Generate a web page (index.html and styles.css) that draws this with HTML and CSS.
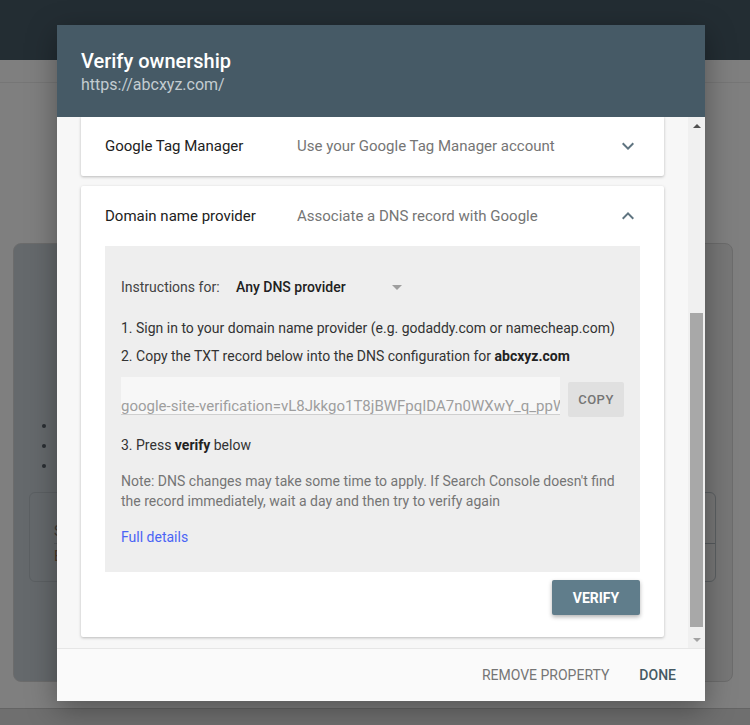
FILE: index.html
```html
<!DOCTYPE html>
<html lang="en">
<head>
    <meta charset="UTF-8">
    <meta name="viewport" content="width=device-width, initial-scale=1.0">
    <title>Verify ownership</title>
    <link rel="stylesheet" href="styles.css">
</head>
<body>

<!-- Page behind the dialog (dimmed) -->
<div class="backdrop">
    <header class="app-bar"></header>
    <div class="app-sub"></div>
    <main class="app-main">
        <section class="bg-card">
            <ul class="bg-list">
                <li>&nbsp;</li>
                <li>&nbsp;</li>
                <li>&nbsp;</li>
            </ul>
            <div class="bg-box">
                <div class="bg-row">S</div>
                <div class="bg-row">E</div>
            </div>
        </section>
    </main>
    <div class="app-foot"></div>
</div>

<!-- Dialog -->
<div class="dialog">
    <div class="dialog-head">
        <h2>Verify ownership</h2>
        <p>https://abcxyz.com/</p>
    </div>

    <div class="dialog-body">
        <div class="scroll-content">

            <!-- Google Tag Manager -->
            <div class="method">
                <div class="method-row">
                    <span class="method-name">Google Tag Manager</span>
                    <span class="method-desc">Use your Google Tag Manager account</span>
                    <svg class="chevron" viewBox="0 0 24 24" width="24" height="24"><path d="M7.41 8.59L12 13.17l4.59-4.58L18 10l-6 6-6-6 1.41-1.41z"/></svg>
                </div>
            </div>

            <!-- Domain name provider -->
            <div class="method">
                <div class="method-row">
                    <span class="method-name">Domain name provider</span>
                    <span class="method-desc">Associate a DNS record with Google</span>
                    <svg class="chevron" viewBox="0 0 24 24" width="24" height="24"><path d="M7.41 15.41L12 10.83l4.59 4.58L18 14l-6-6-6 6z"/></svg>
                </div>

                <div class="panel">
                    <div class="instr-row">
                        <span class="instr-label">Instructions for:</span>
                        <div class="select">
                            <span>Any DNS provider</span>
                            <svg viewBox="0 0 24 24" width="24" height="24"><path d="M7 10l5 5 5-5z"/></svg>
                        </div>
                    </div>

                    <p class="step step-1">1. Sign in to your domain name provider (e.g. godaddy.com or namecheap.com)</p>
                    <p class="step step-2">2. Copy the TXT record below into the DNS configuration for <b>abcxyz.com</b></p>

                    <div class="record-row">
                        <input class="record" type="text" readonly value="google-site-verification=vL8Jkkgo1T8jBWFpqIDA7n0WXwY_q_ppWr4tK2mZ9sQ">
                        <button class="btn-copy" type="button">Copy</button>
                    </div>

                    <p class="step step-3">3. Press <b>verify</b> below</p>

                    <p class="note">Note: DNS changes may take some time to apply. If Search Console doesn't find the record immediately, wait a day and then try to verify again</p>

                    <a class="details" href="#">Full details</a>
                </div>

                <div class="method-actions">
                    <button class="btn-verify" type="button">Verify</button>
                </div>
            </div>

        </div>

        <!-- Scrollbar -->
        <div class="scrollbar">
            <div class="sb-arrow sb-up"></div>
            <div class="sb-track">
                <div class="sb-thumb"></div>
            </div>
            <div class="sb-arrow sb-down"></div>
        </div>
    </div>

    <div class="dialog-foot">
        <button class="btn-text" type="button">Remove property</button>
        <button class="btn-text btn-done" type="button">Done</button>
    </div>
</div>

</body>
</html>
```

FILE: styles.css
```css
body {
    font-family: Roboto, "Noto Sans", Arial, sans-serif;
    background-color: #7f7f7f;
    margin: 0;
    padding: 0;
    height: 725px;
    overflow: hidden;
}

/* Page behind */
.app-bar {
    height: 60px;
    background-color: #232d33;
}
.app-sub {
    height: 22px;
    border-bottom: 1px solid #767676;
}
.app-main {
    padding: 160px 17px 0 13px;
}
.bg-card {
    height: 439px;
    box-sizing: border-box;
    border: 1px solid #6c6c6c;
    border-radius: 8px;
    padding: 171px 16px 0 15px;
    background: linear-gradient(to right, #65696c 0, #65696c 380px, #777 380px);
}
.bg-list {
    margin: 0;
    padding-left: 28px;
    color: #2a2f33;
    font-size: 14px;
    line-height: 20px;
}
.bg-box {
    margin-top: 17px;
    height: 90px;
    box-sizing: border-box;
    border: 1px solid #5c6063;
    border-radius: 6px;
    padding: 26px 0 0 24px;
}
.bg-row {
    color: #3d3a36;
    font-size: 14px;
    line-height: 24px;
}
.bg-row + .bg-row {
    border-top: 1px solid #575b5e;
    color: #4a3a2a;
}
.app-foot {
    margin-top: 26px;
    height: 17px;
    border-top: 1px solid #646464;
    background-color: #6f6f6f;
}

/* Dialog */
.dialog {
    position: fixed;
    left: 57px;
    top: 25px;
    width: 648px;
    height: 676px;
    display: flex;
    flex-direction: column;
    background-color: #fafafa;
    box-shadow: 0 8px 28px rgba(0, 0, 0, 0.35);
}
.dialog-head {
    background-color: #465a66;
    padding: 24px 24px 0;
    height: 92px;
    box-sizing: border-box;
}
.dialog-head h2 {
    margin: 0;
    color: #fff;
    font-size: 20px;
    line-height: 24px;
    font-weight: 500;
}
.dialog-head p {
    margin: 2px 0 0;
    color: #c3ccd1;
    font-size: 16px;
    line-height: 20px;
}
.dialog-body {
    flex: 1;
    display: flex;
    min-height: 0;
    background-color: #f7f7f7;
}
.scroll-content {
    flex: 1;
    overflow: hidden;
    padding: 0 24px;
}

.method {
    background-color: #fff;
    box-shadow: 0 1px 3px rgba(0, 0, 0, 0.25);
    border-radius: 2px;
}
.method:first-child {
    margin-top: -1px;
}
.method + .method {
    margin-top: 10px;
}
.method-row {
    display: grid;
    grid-template-columns: 192px 1fr 24px;
    align-items: center;
    height: 60px;
    padding: 0 24px;
    font-size: 15px;
}
.method-name {
    color: #212121;
}
.method-desc {
    color: #757575;
}
.chevron {
    fill: #5f7480;
}

.panel {
    margin: 0 24px;
    background-color: #eeeeee;
    padding: 21px 16px 25px;
    font-size: 14px;
    line-height: 20px;
    color: #333;
}
.instr-row {
    display: flex;
    align-items: center;
    height: 40px;
}
.instr-label {
    color: #424242;
    width: 115px;
}
.select {
    display: flex;
    align-items: center;
    width: 173px;
    justify-content: space-between;
    color: #212121;
    font-weight: 500;
}
.select svg {
    fill: #9e9e9e;
}
.step {
    margin: 8px 0 0;
}
.step-1 {
    margin-top: 11px;
}
.step b {
    font-weight: 700;
    color: #222;
}
.record-row {
    display: flex;
    gap: 8px;
    margin-top: 11px;
}
.record {
    width: 439px;
    height: 38px;
    box-sizing: border-box;
    padding: 20px 0 0;
    border: none;
    border-bottom: 1px solid #cfcfcf;
    background-color: #f7f7f7;
    font-family: inherit;
    font-size: 15px;
    color: #9e9e9e;
    outline: none;
}
.btn-copy {
    margin-top: 5px;
    width: 56px;
    height: 35px;
    border: none;
    border-radius: 2px;
    background-color: #e0e0e0;
    color: #757575;
    font-family: inherit;
    font-size: 13px;
    font-weight: 500;
    letter-spacing: 0.5px;
    text-transform: uppercase;
    padding: 0;
}
.step-3 {
    margin-top: 18px;
}
.note {
    margin: 16px 0 0;
    color: #757575;
}
.details {
    display: block;
    margin-top: 16px;
    color: #4a64f5;
    text-decoration: none;
}

.method-actions {
    display: flex;
    justify-content: flex-end;
    padding: 8px 24px 22px;
}
.btn-verify {
    width: 88px;
    height: 35px;
    border: none;
    border-radius: 2px;
    background-color: #607d8b;
    color: #fff;
    font-family: inherit;
    font-size: 14px;
    font-weight: 700;
    text-transform: uppercase;
    box-shadow: 0 2px 4px rgba(0, 0, 0, 0.3);
}

/* Fake scrollbar */
.scrollbar {
    width: 17px;
    display: flex;
    flex-direction: column;
    background-color: #f0f0f0;
}
.sb-arrow {
    height: 17px;
    display: flex;
    align-items: center;
    justify-content: center;
}
.sb-up::before {
    content: "";
    border-left: 4px solid transparent;
    border-right: 4px solid transparent;
    border-bottom: 4px solid #505050;
}
.sb-down::before {
    content: "";
    border-left: 4px solid transparent;
    border-right: 4px solid transparent;
    border-top: 4px solid #a3a3a3;
}
.sb-track {
    flex: 1;
    padding: 179px 2px 0;
}
.sb-thumb {
    height: 314px;
    background-color: #a8a8a8;
}

.dialog-foot {
    height: 53px;
    box-sizing: border-box;
    border-top: 1px solid #e6e6e6;
    background-color: #fafafa;
    display: flex;
    align-items: center;
    justify-content: flex-end;
    gap: 30px;
    padding-right: 29px;
}
.btn-text {
    border: none;
    background: none;
    padding: 0;
    font-family: inherit;
    font-size: 14px;
    text-transform: uppercase;
    color: #757575;
}
.btn-done {
    color: #455a64;
    font-weight: 500;
}
```
